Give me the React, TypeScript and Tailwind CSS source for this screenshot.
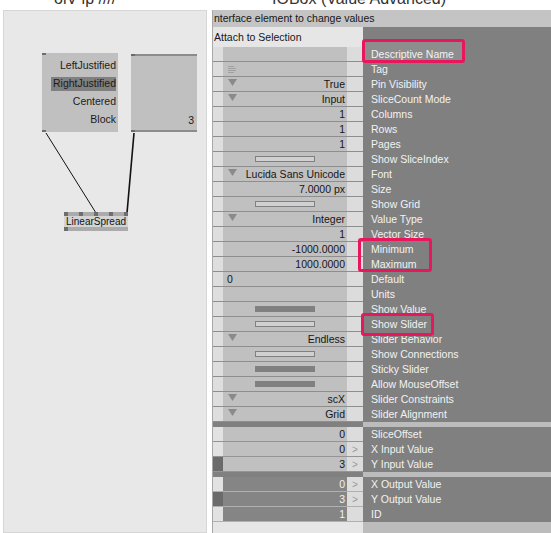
import React from "react";

type Kind = "empty" | "tag" | "drop" | "num" | "left" | "on" | "off";
type Row = { label: string; kind: Kind; value?: string };

const rows: Row[] = [
  { label: "Descriptive Name", kind: "empty" },
  { label: "Tag", kind: "tag" },
  { label: "Pin Visibility", kind: "drop", value: "True" },
  { label: "SliceCount Mode", kind: "drop", value: "Input" },
  { label: "Columns", kind: "num", value: "1" },
  { label: "Rows", kind: "num", value: "1" },
  { label: "Pages", kind: "num", value: "1" },
  { label: "Show SliceIndex", kind: "off" },
  { label: "Font", kind: "drop", value: "Lucida Sans Unicode" },
  { label: "Size", kind: "num", value: "7.0000 px" },
  { label: "Show Grid", kind: "off" },
  { label: "Value Type", kind: "drop", value: "Integer" },
  { label: "Vector Size", kind: "num", value: "1" },
  { label: "Minimum", kind: "num", value: "-1000.0000" },
  { label: "Maximum", kind: "num", value: "1000.0000" },
  { label: "Default", kind: "left", value: "0" },
  { label: "Units", kind: "empty" },
  { label: "Show Value", kind: "on" },
  { label: "Show Slider", kind: "off" },
  { label: "Slider Behavior", kind: "drop", value: "Endless" },
  { label: "Show Connections", kind: "off" },
  { label: "Sticky Slider", kind: "on" },
  { label: "Allow MouseOffset", kind: "on" },
  { label: "Slider Constraints", kind: "drop", value: "scX" },
  { label: "Slider Alignment", kind: "drop", value: "Grid" },
];

type Pin = { label: string; value: string; mark: boolean; arrow: boolean };

const inputs: Pin[] = [
  { label: "SliceOffset", value: "0", mark: false, arrow: false },
  { label: "X Input Value", value: "0", mark: false, arrow: true },
  { label: "Y Input Value", value: "3", mark: true, arrow: true },
];

const outputs: Pin[] = [
  { label: "X Output Value", value: "0", mark: false, arrow: true },
  { label: "Y Output Value", value: "3", mark: true, arrow: true },
  { label: "ID", value: "1", mark: false, arrow: false },
];

function Triangle() {
  return (
    <svg width="9" height="7" viewBox="0 0 9 7" className="shrink-0 self-start mt-[2px]">
      <polygon points="0,0 9,0 4.5,7" fill="#8a8a8a" />
    </svg>
  );
}

function TagIcon() {
  return (
    <svg width="8" height="7" viewBox="0 0 8 7" className="shrink-0">
      <path d="M0 0.5H6M0 2.5H8M0 4.5H8M0 6.5H6" stroke="#a0a0a0" strokeWidth="1" />
    </svg>
  );
}

function ValueCell({ row }: { row: Row }) {
  switch (row.kind) {
    case "tag":
      return (
        <div className="flex h-full items-center pl-[5px]">
          <TagIcon />
        </div>
      );
    case "drop":
      return (
        <div className="flex h-full items-center justify-between pl-[5px] pr-[2px]">
          <Triangle />
          <span>{row.value}</span>
        </div>
      );
    case "num":
      return <div className="flex h-full items-center justify-end pr-[2px]">{row.value}</div>;
    case "left":
      return <div className="flex h-full items-center pl-[4px]">{row.value}</div>;
    case "on":
      return (
        <div className="flex h-full items-center pl-[32px]">
          <div className="h-[6px] w-[60px] bg-[#808080]" />
        </div>
      );
    case "off":
      return (
        <div className="flex h-full items-center pl-[32px]">
          <div className="h-[6px] w-[60px] border border-[#808080] bg-[#d0d0d0]" />
        </div>
      );
    default:
      return null;
  }
}

function PatchCanvas() {
  return (
    <div className="relative ml-[3px] mr-[5px] flex-1 border border-[#d6d6d6] bg-[#e8e8e8]">
      <svg className="absolute left-0 top-0" width="204" height="523">
        <line x1="42" y1="122" x2="92" y2="202" stroke="#111" strokeWidth="1" />
        <line x1="130" y1="122" x2="123" y2="202" stroke="#111" strokeWidth="1.6" />
      </svg>

      <div className="absolute left-[38px] top-[42px] flex h-[79px] w-[76px] flex-col items-end bg-[#c0c0c0] pr-[2px] pt-[4px] text-[10.5px] text-[#1b1b1b]">
        <div className="absolute left-0 top-0 h-[2px] w-[4px] bg-[#6e6e6e]" />
        <div className="absolute bottom-0 left-0 h-[2px] w-[4px] bg-[#6e6e6e]" />
        <div className="flex h-[18px] items-center">LeftJustified</div>
        <div className="flex h-[18px] items-center">
          <span className="flex h-[14px] w-[65px] items-center justify-end whitespace-nowrap bg-[#808080]">RightJustified</span>
        </div>
        <div className="flex h-[18px] items-center">Centered</div>
        <div className="flex h-[18px] items-center">Block</div>
      </div>

      <div className="absolute left-[127px] top-[43px] flex h-[78px] w-[66px] flex-col justify-between bg-[#c0c0c0] text-[10.5px] text-[#1b1b1b]">
        <div className="flex h-[2px] bg-[#8c8c8c]">
          <div className="w-[4px] bg-[#6a6a6a]" />
        </div>
        <div className="flex flex-1 items-end justify-end pb-[1px] pr-[3px]">3</div>
        <div className="flex h-[2px] bg-[#8c8c8c]">
          <div className="w-[4px] bg-[#6a6a6a]" />
        </div>
      </div>

      <div className="absolute left-[60px] top-[201px] flex w-[64px] flex-col text-[10px] text-[#111]">
        <div className="flex h-[4px] justify-between bg-[#ababab]">
          <div className="w-[4px] bg-[#6e6e6e]" />
          <div className="w-[4px] bg-[#6e6e6e]" />
          <div className="w-[4px] bg-[#6e6e6e]" />
          <div className="w-[4px] bg-[#6e6e6e]" />
          <div className="w-[4px] bg-[#6e6e6e]" />
        </div>
        <div className="flex h-[11px] items-center justify-center bg-[#d4d4d4] leading-none">LinearSpread</div>
        <div className="flex h-[4px] bg-[#ababab]">
          <div className="w-[4px] bg-[#6e6e6e]" />
        </div>
      </div>
    </div>
  );
}

function PinRow({ pin, output }: { pin: Pin; output: boolean }) {
  return (
    <div className="flex h-[15px]">
      <div
        className={
          output
            ? "flex w-[150px] border-b border-[#b0b0b0]"
            : "flex w-[150px] border-b border-[#949494]"
        }
      >
        <div className={pin.mark ? "w-[10px] bg-[#6b6b6b]" : "w-[10px] bg-[#e2e2e2]"} />
        <div
          className={
            output
              ? "flex w-[124px] items-center justify-end bg-[#858585] pr-[2px] text-[#f2f2f2]"
              : "flex w-[124px] items-center justify-end bg-[#c0c0c0] pr-[2px]"
          }
        >
          {pin.value}
        </div>
        <div className="flex w-[16px] items-center justify-center bg-[#dcdcdc] text-[10px] text-[#9a9a9a]">
          {pin.arrow ? ">" : ""}
        </div>
      </div>
      <div className="flex flex-1 items-center bg-[#808080] pl-[8px] text-[#f2f2f2]">{pin.label}</div>
    </div>
  );
}

function Inspector() {
  return (
    <div className="relative flex w-[339px] flex-col">
      <div className="h-[10px] overflow-hidden bg-white pl-[60px]">
        <div className="-mt-[9px] whitespace-nowrap text-[16px] leading-[16px] text-[#333]">IOBox (Value Advanced)</div>
      </div>
      <div className="flex flex-1 flex-col border-l border-[#a8a8a8] text-[10.5px] leading-[15px] text-[#161616]">
        <div className="flex h-[17px] items-center whitespace-nowrap bg-[#c4c4c4] pl-[1px]">
          nterface element to change values
        </div>
        <div className="flex h-[20px]">
          <div className="flex w-[150px] items-center bg-[#e6e6e6] pl-[1px]">Attach to Selection</div>
          <div className="flex-1 bg-[#808080]" />
        </div>

        {rows.map((row) => (
          <div key={row.label} className="flex h-[15px]">
            <div className="flex w-[150px] border-b border-[#8e8e8e]">
              <div className="w-[10px] bg-[#dedede]" />
              <div className="w-[124px] bg-[#c0c0c0]">
                <ValueCell row={row} />
              </div>
              <div className="w-[16px] bg-[#dcdcdc]" />
            </div>
            <div className="flex flex-1 items-center bg-[#808080] pl-[8px] text-[#f2f2f2]">{row.label}</div>
          </div>
        ))}

        <div className="flex h-[5px]">
          <div className="w-[150px] bg-[#808080]" />
          <div className="flex-1 bg-[#bcbcbc]" />
        </div>
        {inputs.map((pin) => (
          <PinRow key={pin.label} pin={pin} output={false} />
        ))}
        <div className="flex h-[5px]">
          <div className="w-[150px] bg-[#808080]" />
          <div className="flex-1 bg-[#bcbcbc]" />
        </div>
        {outputs.map((pin) => (
          <PinRow key={pin.label} pin={pin} output={true} />
        ))}
        <div className="flex flex-1">
          <div className="w-[150px] bg-[#e6e6e6]" />
          <div className="flex-1 bg-[#bcbcbc]" />
        </div>
      </div>

      <div className="absolute left-[150px] top-[39px] h-[24px] w-[103px] rounded-[3px] border-[3px] border-[#e8175d] bg-white/10" />
      <div className="absolute left-[146px] top-[238px] h-[34px] w-[74px] rounded-[3px] border-[3px] border-[#e8175d]" />
      <div className="absolute left-[149px] top-[313px] h-[23px] w-[73px] rounded-[3px] border-[3px] border-[#e8175d]" />
    </div>
  );
}

export default function App() {
  return (
    <div className="flex h-[533px] w-[551px] overflow-hidden bg-white font-['Liberation_Sans',Arial,sans-serif]">
      <div className="flex w-[212px] flex-col">
        <div className="h-[10px] overflow-hidden bg-white pl-[54px]">
          <div className="-mt-[9px] whitespace-nowrap text-[16px] leading-[16px] text-[#333]">olV ip ////</div>
        </div>
        <PatchCanvas />
      </div>
      <Inspector />
    </div>
  );
}
